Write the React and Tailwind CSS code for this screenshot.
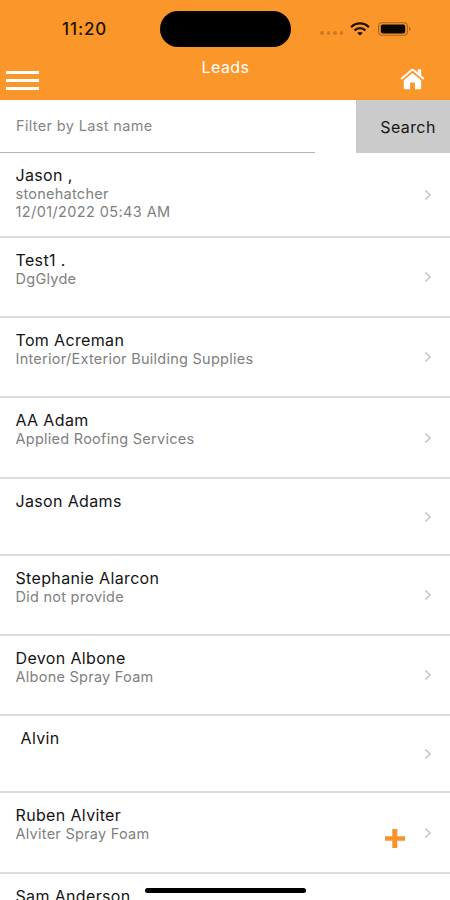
import clsx from 'clsx'

const leads = [
  { name: 'Jason ,', company: 'stonehatcher', date: '12/01/2022 05:43 AM', height: 'h-[85px]' },
  { name: 'Test1 .', company: 'DgGlyde', height: 'h-20' },
  { name: 'Tom Acreman', company: 'Interior/Exterior Building Supplies', height: 'h-20' },
  { name: 'AA Adam', company: 'Applied Roofing Services', height: 'h-[81px]' },
  { name: 'Jason Adams', height: 'h-[77px]' },
  { name: 'Stephanie Alarcon', company: 'Did not provide', height: 'h-20' },
  { name: 'Devon Albone', company: 'Albone Spray Foam', height: 'h-20' },
  { name: 'Alvin', height: 'h-[77px]', indent: true },
  { name: 'Ruben Alviter', company: 'Alviter Spray Foam', height: 'h-[81px]' },
  { name: 'Sam Anderson', height: 'h-20' }
]

function WifiIcon() {
  return (
    <svg width="20" height="14" viewBox="0 0 20 14" fill="none" stroke="#1c1002" strokeWidth="2.3">
      <path d="M1.1 5.2C6 .1 14 .1 18.9 5.2" />
      <path d="M4.5 8.5c3.1-3.1 7.9-3.1 11 0" />
      <path d="M7.2 11.1c1.6-1.5 4-1.5 5.6 0L10 13.6z" fill="#1c1002" stroke="none" />
    </svg>
  )
}

function BatteryIcon() {
  return (
    <svg width="34" height="14" viewBox="0 0 34 14">
      <rect x="0.6" y="0.7" width="28.8" height="12.6" rx="3.5" fill="none" stroke="#a8651c" strokeWidth="1.1" />
      <rect x="2.8" y="2.4" width="24.4" height="9.2" rx="1.8" fill="#0c0500" />
      <path d="M31 5c2 .6 2 3.4 0 4z" fill="#a8651c" />
    </svg>
  )
}

function HomeIcon() {
  return (
    <svg width="25" height="22" viewBox="0 0 25 22" fill="#fff">
      <path d="M17.8 1.2h3.4v7l-3.4-3z" />
      <path d="M12.5 4.9 3.8 12.2V20c0 .8.5 1.3 1.3 1.3h5v-6.7h4.8v6.7h5c.8 0 1.3-.5 1.3-1.3v-7.8z" />
      <path d="m2.6 12.1 9.9-8.3 9.9 8.3" fill="none" stroke="#fb962b" strokeWidth="0.9" />
      <path d="m1.2 10.9 10.2-8.6c.7-.6 1.5-.6 2.2 0l10.2 8.6" fill="none" stroke="#fff" strokeWidth="1.9" />
    </svg>
  )
}

function Chevron() {
  return (
    <svg width="8" height="12" viewBox="0 0 8 12" fill="none" stroke="#c9c9c9" strokeWidth="1.6">
      <path d="m1.2 1.4 4.9 4.6-4.9 4.6" />
    </svg>
  )
}

function Header() {
  return (
    <header className="h-[100px] shrink-0 bg-[#fb962b] pt-[11px]">
      <div className="grid h-9 grid-cols-[160px_131px_1fr] items-center">
        <span className="pt-0.5 pl-[62px] text-[17px] font-medium tracking-[0.9px] text-[#231300]">11:20</span>
        <div className="h-9 rounded-full bg-black" />
        <div className="flex items-center pl-[29px]">
          <div className="mt-2 flex gap-[3px]">
            {[0, 1, 2, 3].map(dot => (
              <i key={dot} className="size-[3.5px] rounded-full bg-[#c97a27]" />
            ))}
          </div>
          <div className="ml-[7px]"><WifiIcon /></div>
          <div className="ml-[8px]"><BatteryIcon /></div>
        </div>
      </div>
      <div className="grid h-[53px] grid-cols-3">
        <button className="flex flex-col gap-[5px] pt-6 pl-1.5">
          <i className="h-[3px] w-[33px] bg-white" />
          <i className="h-[3px] w-[33px] bg-white" />
          <i className="h-[3px] w-[33px] bg-white" />
        </button>
        <h1 className="pt-[10px] pl-px text-center text-[16px] leading-5 tracking-[0.4px] text-white">Leads</h1>
        <button className="flex justify-end pt-[21px] pr-[25px]"><HomeIcon /></button>
      </div>
    </header>
  )
}

function SearchBar() {
  return (
    <div className="flex h-[53px] shrink-0 justify-between">
      <div className="flex w-[315px] items-center border-b border-[#b5b5b5] pl-4 text-[14.5px] tracking-[0.35px] text-[#858585]">
        Filter by Last name
      </div>
      <button className="w-[94px] bg-[#cbcbcb] pl-[10px] text-[16px] tracking-[0.4px] text-[#161616]">Search</button>
    </div>
  )
}

function LeadRow({ lead }) {
  return (
    <li className={clsx('flex shrink-0 items-center justify-between border-b-2 border-[#dcdcdc] pr-[18px] pl-[15.5px]', lead.height)}>
      <div className="self-start pt-[12.5px] whitespace-nowrap">
        <p className={clsx('text-[16px] leading-[19px] tracking-[0.35px] text-[#141414]', lead.indent && 'pl-[5px]')}>{lead.name}</p>
        <p className="text-[14.5px] leading-[18px] tracking-[0.26px] text-[#808080]">{lead.company}</p>
        {lead.date && <p className="text-[14.5px] leading-[18px] tracking-[0.39px] text-[#808080]">{lead.date}</p>}
      </div>
      <Chevron />
    </li>
  )
}

export default function App() {
  return (
    <div className="relative flex h-[900px] w-[450px] flex-col overflow-hidden bg-white font-['Inter','Liberation_Sans',sans-serif]">
      <Header />
      <SearchBar />
      <ul className="flex flex-col">
        {leads.map(lead => (
          <LeadRow key={lead.name} lead={lead} />
        ))}
      </ul>

      {/* floating add button */}
      <button className="absolute top-[829px] left-[385px]">
        <svg width="20" height="19" viewBox="0 0 20 19" fill="#f8922a">
          <path d="M7.3 0h5v7.2H20v4.6h-7.7V19h-5v-7.2H0V7.2h7.3z" />
        </svg>
      </button>
      <div className="absolute top-[888px] left-[145px] h-[5px] w-[161px] rounded-full bg-black" />
    </div>
  )
}
